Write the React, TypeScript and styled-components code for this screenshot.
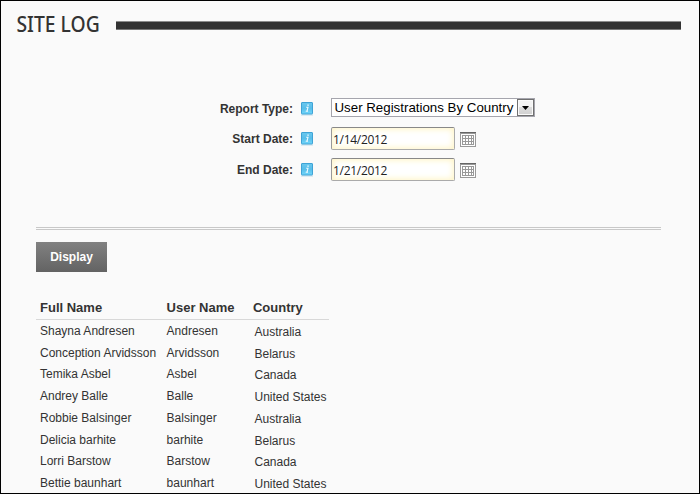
import React from "react";
import styled, { createGlobalStyle } from "styled-components";

const Global = createGlobalStyle`
  * { box-sizing: border-box; }
  body { margin: 0; background: #fafafa; }
`;

const Page = styled.main`
  width: 700px;
  height: 494px;
  overflow: hidden;
  border: 1px solid #000;
  background: #fafafa;
  color: #333;
  font: 12px/16px "Liberation Sans", Arial, sans-serif;
`;

const TitleBar = styled.header`
  display: flex;
  align-items: center;
  height: 28px;
  margin: 10px 18px 0 15px;
`;

const Title = styled.h1`
  width: 100px;
  margin: 0;
  padding-bottom: 2px;
  font: 500 21px/26px "Noto Sans", "Open Sans", sans-serif;
  text-indent: 0.5px;
  white-space: nowrap;
  transform: scaleX(0.92);
  transform-origin: left center;
`;

const Rule = styled.div`
  flex: 1;
  height: 9px;
  margin-top: 1px;
  background: #333;
  border-top: 1px solid #8c8c8c;
  border-bottom: 1px solid #777;
`;

const Form = styled.form`
  display: grid;
  grid-template-columns: 257px 38px auto;
  grid-template-rows: 21px 23px 23px;
  row-gap: 8px;
  align-items: center;
  margin: 59px 0 0 35px;
  padding: 0;
`;

const Label = styled.label`
  font-weight: bold;
  text-align: right;
  white-space: nowrap;
`;

const InfoCell = styled.span`
  display: flex;
  padding-left: 8px;
`;

const Control = styled.div`
  display: flex;
  align-items: center;
  align-self: start;
  gap: 5px;
`;

const Select = styled.button`
  display: flex;
  align-items: center;
  justify-content: space-between;
  width: 204px;
  height: 19px;
  padding: 0 0 0 2.5px;
  border: 1px solid #a5a5ad;
  border-radius: 0;
  background: #fff;
  color: #000;
  font: 13.3px/17px "Liberation Sans", Arial, sans-serif;
  white-space: nowrap;
`;

const Arrow = styled.span`
  display: flex;
  align-items: center;
  justify-content: center;
  width: 17px;
  height: 17px;
  border: 1px solid #707070;
  background: linear-gradient(#f3f3f3 50%, #dcdcdc 50%, #d0d0d0);
  box-shadow: inset 0 0 0 1px #fafafa;
`;

const DateInput = styled.input`
  width: 124px;
  height: 23px;
  padding: 1px 1px 0;
  border: 1px solid #aaa;
  border-top-color: #888;
  border-left-color: #999;
  border-radius: 2px;
  background: #fff;
  box-shadow: inset 0 0 6px 1px #fff4c2;
  color: #222;
  font: 12px/20px "Open Sans", "Noto Sans", sans-serif;
  letter-spacing: -0.3px;
`;

const CalendarButton = styled.span`
  display: flex;
  padding-top: 2px;
`;

const Divider = styled.hr`
  width: 625px;
  height: 3px;
  margin: 46px 0 12px 35px;
  border: 0;
  border-top: 3px double #c8c8c8;
`;

const DisplayButton = styled.button`
  display: block;
  width: 71px;
  height: 30px;
  margin-left: 35px;
  padding: 0;
  border: 0;
  background: linear-gradient(#818181, #636363);
  color: #fff;
  font: bold 12px/30px "Liberation Sans", Arial, sans-serif;
`;

const Table = styled.table`
  width: 293px;
  margin: 24px 0 0 35px;
  border-collapse: separate;
  border-spacing: 0;
  table-layout: fixed;
`;

const HeadCell = styled.th<{ $width: number }>`
  width: ${(p) => p.$width}px;
  height: 24px;
  padding: 1px 0 0 4px;
  border-bottom: 1px solid #d8d8d8;
  font-size: 13px;
  text-align: left;
  white-space: nowrap;
`;

const Cell = styled.td<{ $country?: boolean }>`
  height: 21.75px;
  padding: ${(p) => (p.$country ? "2px 0 0 5.5px" : "0 0 0 4px")};
  line-height: 16px;
  vertical-align: middle;
  white-space: nowrap;
`;

const InfoIcon = () => (
  <svg width="12" height="14" viewBox="0 0 12 14">
    <defs>
      <linearGradient id="info" x2="0" y2="1">
        <stop stopColor="#69c8ee" />
        <stop offset=".5" stopColor="#58bde9" />
        <stop offset="1" stopColor="#70d6fa" />
      </linearGradient>
    </defs>
    <rect y="12" width="12" height="2" fill="#dcebf2" />
    <rect x=".5" y=".5" width="11" height="11.5" rx=".5" fill="url(#info)" stroke="#3fa3d6" />
    <path d="M6.3 3.1h1.5M5.2 5.3H7L6 9M4.7 9.2H7" fill="none" stroke="#eefaff" strokeWidth="1.1" />
  </svg>
);

const CalendarIcon = () => (
  <svg width="16" height="15" viewBox="0 0 16 15" shapeRendering="crispEdges">
    <rect x=".5" y=".5" width="15" height="14" fill="#fff" stroke="#999" />
    <rect width="16" height="1" fill="#666" />
    <rect x="1" y="1" width="14" height="1" fill="#999" />
    <rect x="2" y="3" width="12" height="10" fill="#999" />
    {[3, 6, 9, 12].map((x) =>
      [4, 7, 10].map((y) => (
        <rect key={`${x}-${y}`} x={x} y={y} width={x === 12 ? 1 : 2} height="2" fill="#fff" />
      ))
    )}
  </svg>
);

const dates = [
  { label: "Start Date:", value: "1/14/2012" },
  { label: "End Date:", value: "1/21/2012" },
];

const users = [
  ["Shayna Andresen", "Andresen", "Australia"],
  ["Conception Arvidsson", "Arvidsson", "Belarus"],
  ["Temika Asbel", "Asbel", "Canada"],
  ["Andrey Balle", "Balle", "United States"],
  ["Robbie Balsinger", "Balsinger", "Australia"],
  ["Delicia barhite", "barhite", "Belarus"],
  ["Lorri Barstow", "Barstow", "Canada"],
  ["Bettie baunhart", "baunhart", "United States"],
];

export default function App() {
  return (
    <Page>
      <Global />
      <TitleBar>
        <Title>SITE LOG</Title>
        <Rule />
      </TitleBar>
      <Form>
        <Label>Report Type:</Label>
        <InfoCell><InfoIcon /></InfoCell>
        <Control>
          <Select type="button">
            User Registrations By Country
            <Arrow>
              <svg width="7" height="4" viewBox="0 0 7 4"><path d="M0 0h7L3.5 4z" fill="#000" /></svg>
            </Arrow>
          </Select>
        </Control>
        {dates.map((d) => (
          <React.Fragment key={d.label}>
            <Label>{d.label}</Label>
            <InfoCell><InfoIcon /></InfoCell>
            <Control>
              <DateInput aria-label={d.label} defaultValue={d.value} />
              <CalendarButton><CalendarIcon /></CalendarButton>
            </Control>
          </React.Fragment>
        ))}
      </Form>
      <Divider />
      <DisplayButton type="button">Display</DisplayButton>
      <Table>
        <thead>
          <tr>
            <HeadCell $width={126.6}>Full Name</HeadCell>
            <HeadCell $width={86.4}>User Name</HeadCell>
            <HeadCell $width={80}>Country</HeadCell>
          </tr>
        </thead>
        <tbody>
          {users.map(([name, user, country]) => (
            <tr key={name}>
              <Cell>{name}</Cell>
              <Cell>{user}</Cell>
              <Cell $country>{country}</Cell>
            </tr>
          ))}
        </tbody>
      </Table>
    </Page>
  );
}
